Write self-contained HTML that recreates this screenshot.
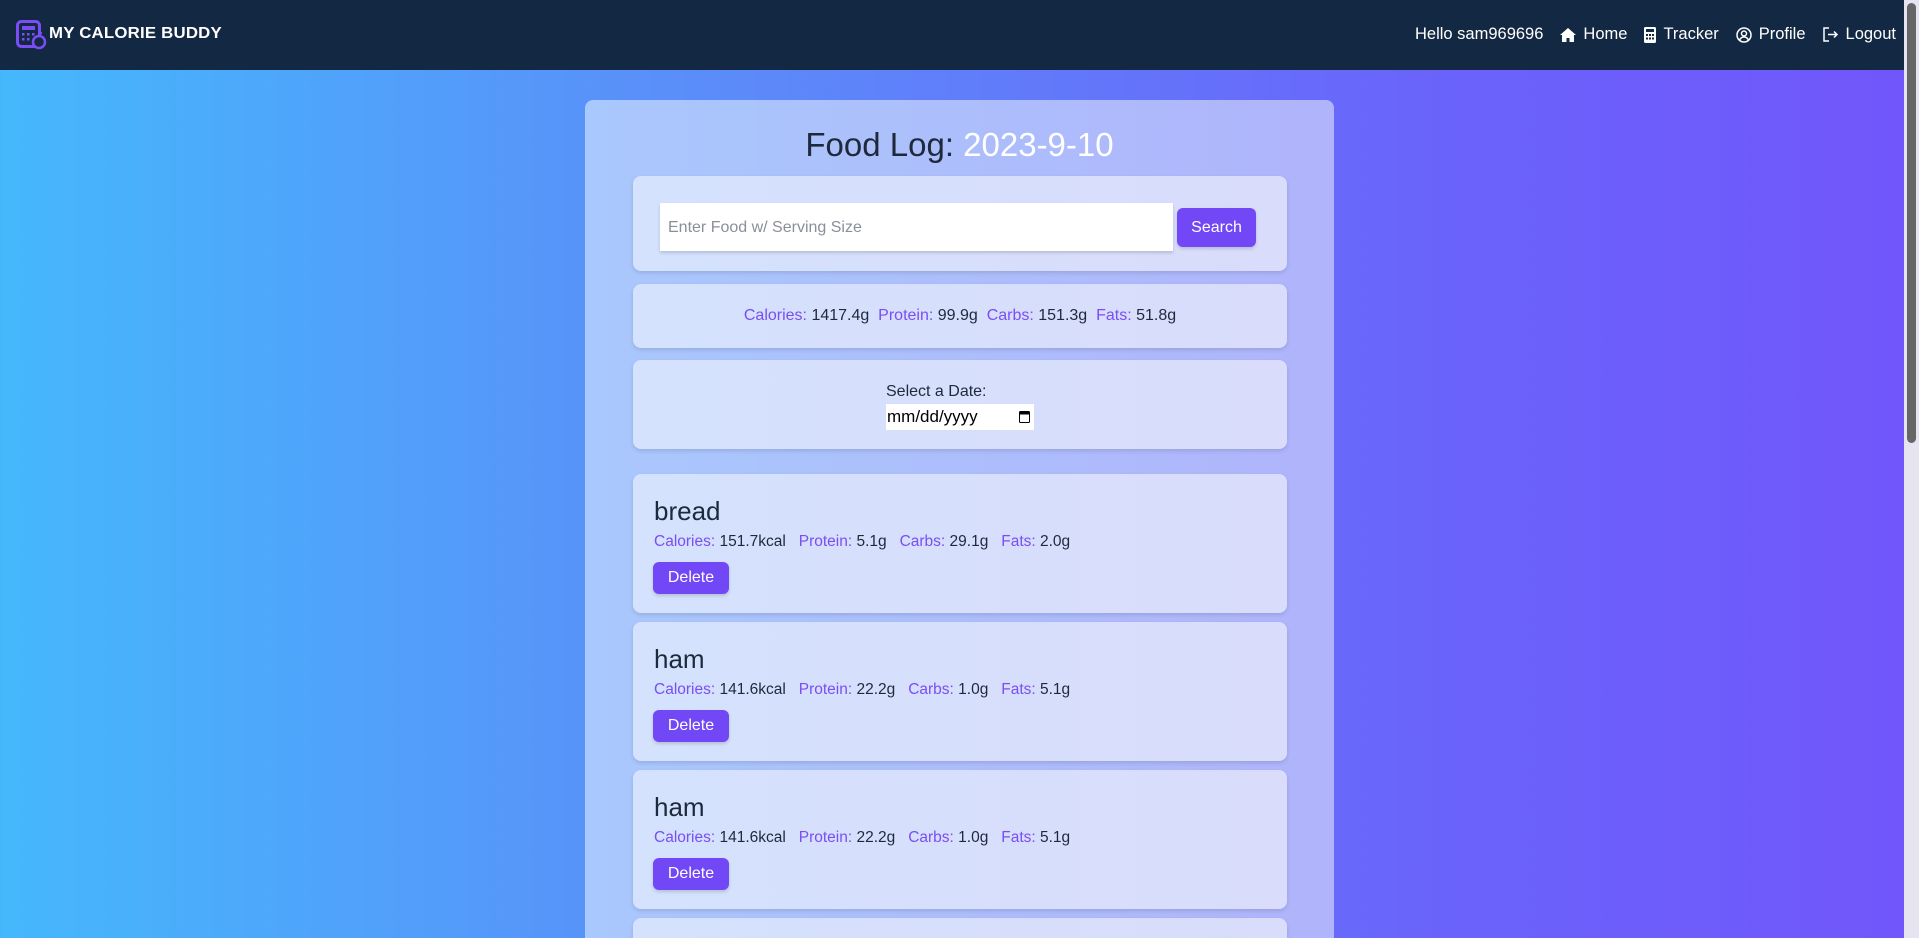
<!DOCTYPE html>
<html><head><meta charset="utf-8"><style>
*{box-sizing:border-box;margin:0;padding:0}
html,body{width:1919px;height:938px;overflow:hidden}
body{font-family:"Liberation Sans",sans-serif;background:linear-gradient(90deg,#45b8fc 0%,#5a8ef9 35%,#6a63fb 75%,#7156fb 100%);position:relative}
.nav{position:absolute;left:0;top:0;width:1904px;height:70px;background:#132842;color:#fff}
.logo{position:absolute;left:16px;top:20px}
.brand{position:absolute;left:49px;top:25px;font-weight:900;font-size:16px;letter-spacing:0.2px;transform:scaleX(1.05);transform-origin:left}
.links{position:absolute;right:8px;top:25px;font-size:16.5px;display:flex;gap:17px;align-items:center}
.links span{display:flex;align-items:center;gap:7px}
.sb{position:absolute;right:0;top:0;width:15px;height:938px;background:#e6e4f0}
.sb div{position:absolute;left:3px;top:3px;width:9px;height:440px;border-radius:5px;background:#666}
.wrap{position:absolute;left:585px;top:100px;width:749px;height:900px;border-radius:8px;background:linear-gradient(90deg,#a9c8fd,#b0b4fb)}
h1{position:absolute;left:0;width:100%;top:26px;text-align:center;font-weight:normal;font-size:33px;color:#1e293b}
h1 b{font-weight:normal;color:#fff}
.card{position:absolute;left:48px;width:654px;border-radius:8px;background:linear-gradient(90deg,#d4e2fd,#d9dcfb);box-shadow:0 2px 4px rgba(0,0,0,.12)}
.inp{position:absolute;left:27px;top:27px;width:513px;height:48px;background:#fff;box-shadow:0 2px 3px rgba(0,0,0,.15);color:#8a8f99;font-size:16px;padding:16px 8px}
.btn{position:absolute;background:#7247f6;color:#fff;border-radius:6px;font-size:16px;text-align:center;box-shadow:0 2px 3px rgba(0,0,0,.15)}
.p{color:#7a4df5}
.tot{text-align:center;font-size:16px;color:#1e293b;padding-top:23px}
.item .name{position:absolute;left:21px;top:22px;font-size:26px;color:#1e293b}
.item .m{position:absolute;left:21px;top:59px;font-size:15.5px;color:#1e293b}
</style></head><body>
<div class="nav">
<svg class="logo" width="31" height="30" viewBox="0 0 31 30"><rect x="1.5" y="1.5" width="22" height="25" rx="4" fill="none" stroke="#7a4df5" stroke-width="3"/><rect x="6" y="6" width="13" height="4" fill="#7a4df5"/><g fill="#7a4df5"><rect x="6" y="13" width="2.5" height="2.5"/><rect x="11" y="13" width="2.5" height="2.5"/><rect x="16" y="13" width="2.5" height="2.5"/><rect x="6" y="18" width="2.5" height="2.5"/><rect x="11" y="18" width="2.5" height="2.5"/></g><circle cx="23" cy="22" r="6" fill="#132842" stroke="#7a4df5" stroke-width="2.5"/><path d="M23 16 q1-3 3-3" stroke="#7a4df5" stroke-width="2" fill="none"/></svg>
<div class="brand">MY CALORIE BUDDY</div>
<div class="links">
<span>Hello sam969696</span>
<span><svg width="16" height="14" viewBox="0 0 16 14"><path d="M8 0L0 7h2v7h4.5v-4h3v4H14V7h2z" fill="#fff"/></svg>Home</span>
<span><svg width="12" height="16" viewBox="0 0 12 16"><rect width="12" height="16" rx="1.5" fill="#fff"/><rect x="2" y="2" width="8" height="3" fill="#132842"/><g fill="#132842"><rect x="2" y="7" width="2" height="2"/><rect x="5" y="7" width="2" height="2"/><rect x="8" y="7" width="2" height="2"/><rect x="2" y="10.5" width="2" height="2"/><rect x="5" y="10.5" width="2" height="2"/><rect x="8" y="10.5" width="2" height="2"/></g></svg>Tracker</span>
<span><svg width="16" height="16" viewBox="0 0 16 16" fill="none" stroke="#fff" stroke-width="1.5"><circle cx="8" cy="8" r="7"/><circle cx="8" cy="6.5" r="2.5"/><path d="M3.5 13c1-2 2.5-3 4.5-3s3.5 1 4.5 3"/></svg>Profile</span>
<span><svg width="16" height="15" viewBox="0 0 16 15" fill="none" stroke="#fff" stroke-width="1.5"><path d="M6 1H1v13h5"/><path d="M5 7.5h9M11 4.5l3 3-3 3"/></svg>Logout</span>
</div>
</div>
<div class="sb"><div></div></div>
<div class="wrap">
<h1>Food Log: <b>2023-9-10</b></h1>
<div class="card" style="top:76px;height:95px">
<div class="inp">Enter Food w/ Serving Size</div>
<div class="btn" style="left:544px;top:32px;width:79px;height:39px;line-height:39px">Search</div>
</div>
<div class="card tot" style="top:184px;height:64px"><span class="p">Calories:</span> 1417.4g&nbsp; <span class="p">Protein:</span> 99.9g&nbsp; <span class="p">Carbs:</span> 151.3g&nbsp; <span class="p">Fats:</span> 51.8g</div>
<div class="card" style="top:260px;height:89px;text-align:center;font-size:16px;color:#1e293b">
<div style="position:absolute;left:253px;top:23px">Select a Date:</div>
<div style="position:absolute;left:253px;top:44px;width:148px;height:26px;background:#fff;color:#000;font-size:17px;text-align:left;padding:3px 1px">mm/dd/yyyy<svg style="position:absolute;right:4px;top:6px" width="11" height="13" viewBox="0 0 11 13"><rect x="0.5" y="1.5" width="10" height="11" rx="1" fill="none" stroke="#000"/><rect x="0.5" y="1.5" width="10" height="3" fill="#000"/></svg></div>
</div>
<div class="card item" style="top:374px;height:139px"><div class="name">bread</div><div class="m"><span class="p">Calories:</span> 151.7kcal &nbsp; <span class="p">Protein:</span> 5.1g &nbsp; <span class="p">Carbs:</span> 29.1g &nbsp; <span class="p">Fats:</span> 2.0g</div><div class="btn" style="left:20px;top:88px;width:76px;height:32px;line-height:32px">Delete</div></div>
<div class="card item" style="top:522px;height:139px"><div class="name">ham</div><div class="m"><span class="p">Calories:</span> 141.6kcal &nbsp; <span class="p">Protein:</span> 22.2g &nbsp; <span class="p">Carbs:</span> 1.0g &nbsp; <span class="p">Fats:</span> 5.1g</div><div class="btn" style="left:20px;top:88px;width:76px;height:32px;line-height:32px">Delete</div></div>
<div class="card item" style="top:670px;height:139px"><div class="name">ham</div><div class="m"><span class="p">Calories:</span> 141.6kcal &nbsp; <span class="p">Protein:</span> 22.2g &nbsp; <span class="p">Carbs:</span> 1.0g &nbsp; <span class="p">Fats:</span> 5.1g</div><div class="btn" style="left:20px;top:88px;width:76px;height:32px;line-height:32px">Delete</div></div>
<div class="card item" style="top:818px;height:139px"></div>
</div>
</body></html>
